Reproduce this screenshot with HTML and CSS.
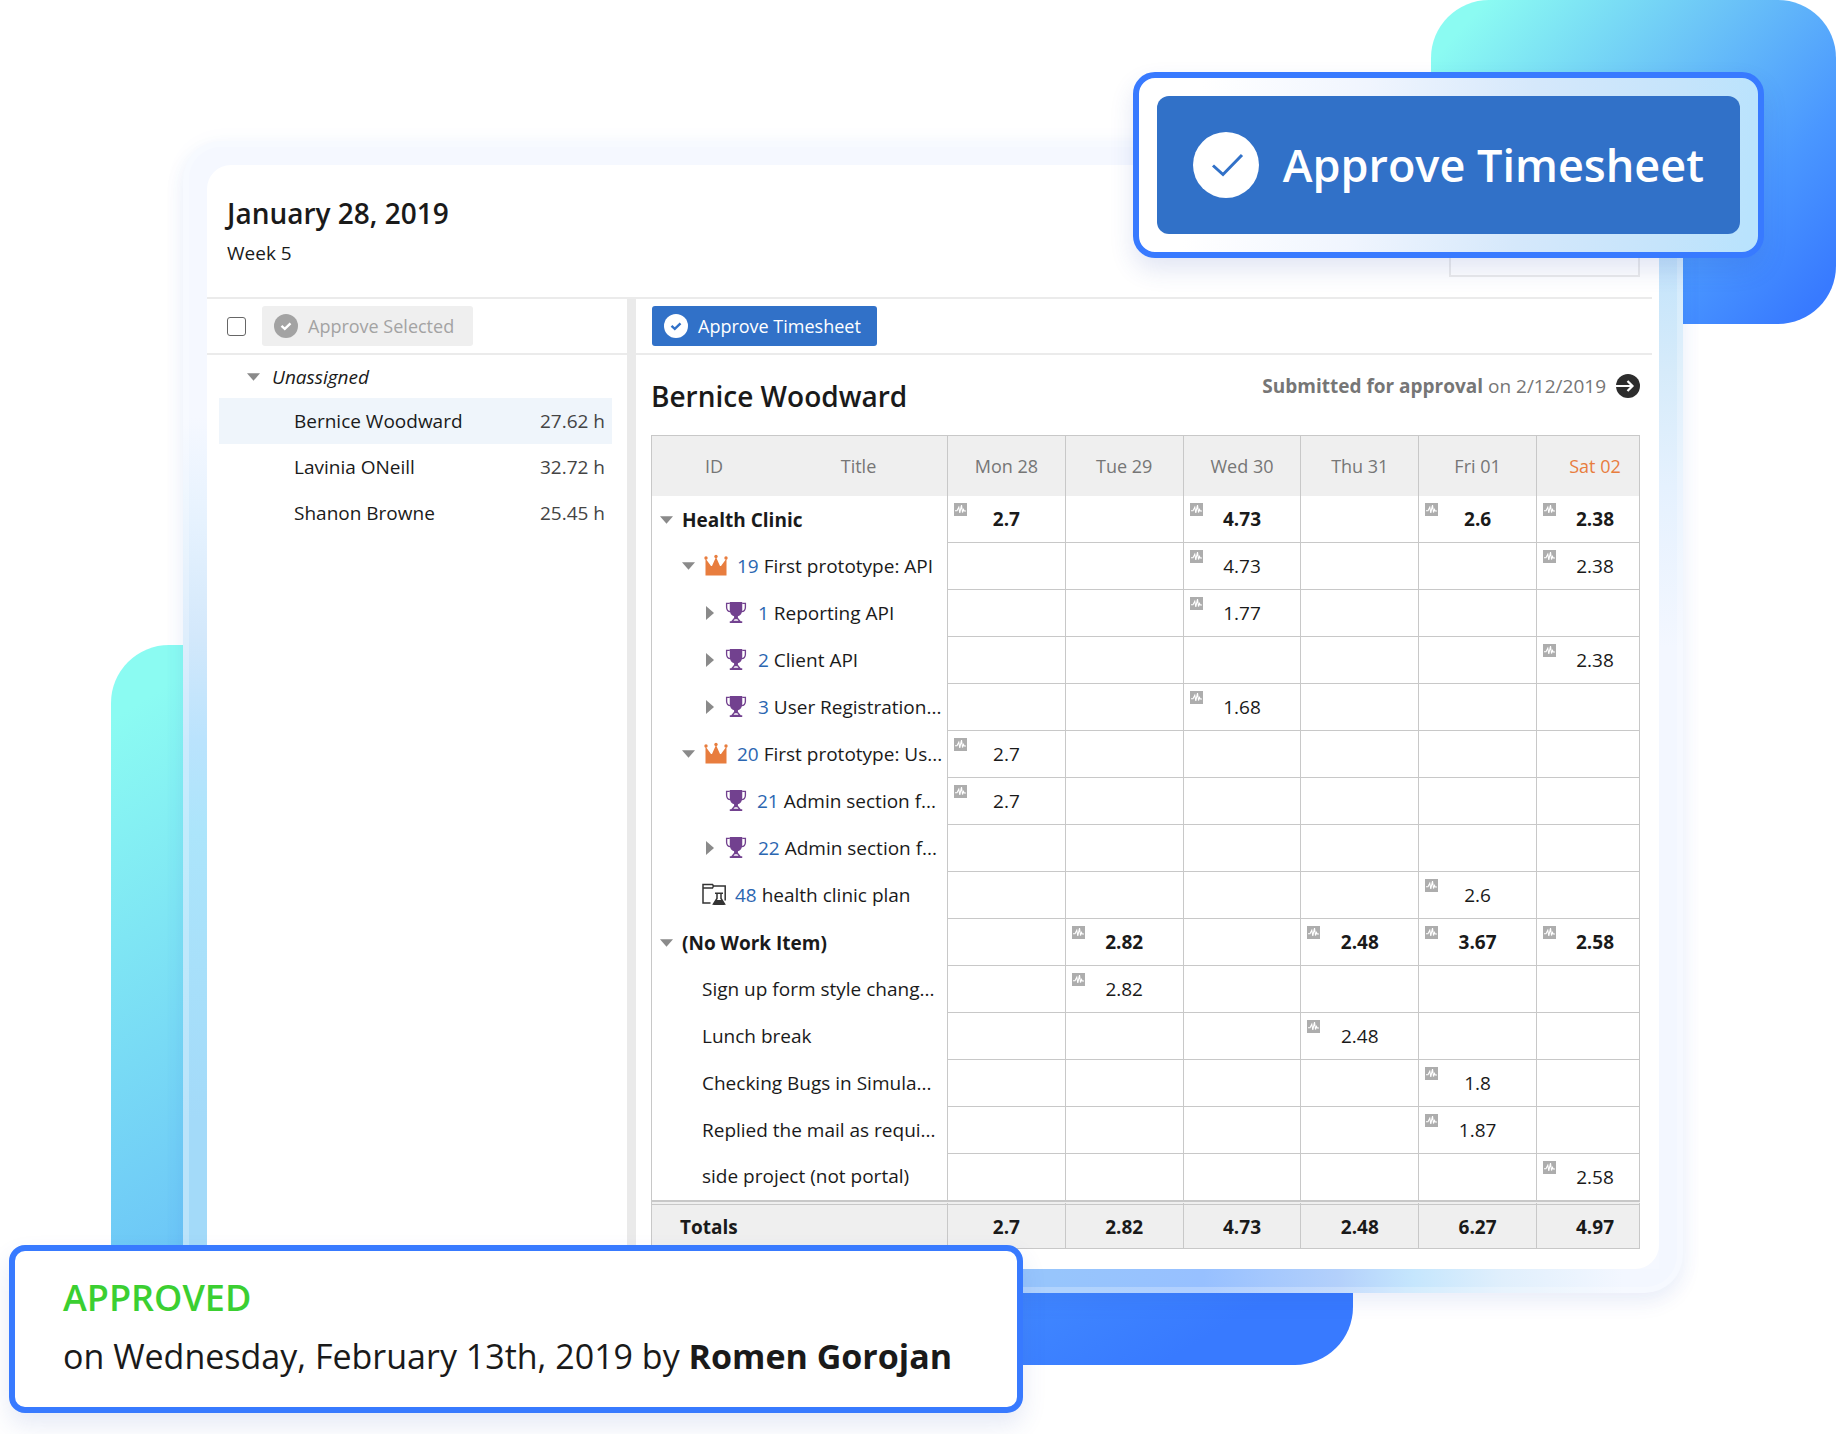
FILE: index.html
```html
<!DOCTYPE html>
<html lang="en">
<head>
<meta charset="utf-8">
<meta name="viewport" content="width=device-width, initial-scale=1">
<title>Timesheet approval</title>
<link rel="stylesheet" href="styles.css">
</head>
<body>
<svg class="sprite" aria-hidden="true">
  <symbol id="tick" viewBox="0 0 24 24"><path d="M7.500 11.800l3.300 3 5.700-5.500" fill="none" stroke="currentColor" stroke-width="2.400"/></symbol>
  <symbol id="down" viewBox="0 0 14 8"><path d="M0 0h14L7 8z" fill="#8a8a8a"/></symbol>
  <symbol id="right" viewBox="0 0 8 14"><path d="M0 0v14l8-7z" fill="#8a8a8a"/></symbol>
  <symbol id="crown" viewBox="0 0 24 22"><path d="M1.500 21V4l5.500 7.500h1L12 2.500l4 9h1L22.500 4v17z" fill="#e87d3e"/><circle cx="2" cy="3.500" r="1.700" fill="#e87d3e"/><circle cx="12" cy="2" r="1.700" fill="#e87d3e"/><circle cx="22" cy="3.500" r="1.700" fill="#e87d3e"/></symbol>
  <symbol id="trophy" viewBox="0 0 22 24"><path d="M4.500 1h13v8c0 4-2 6-4.500 7v1.500l3 3.500h1.500v2h-13v-2H6l3-3.500V16C6.500 15 4.500 13 4.500 9z" fill="#72418f"/><path d="M4.500 2.500H1.200v4c0 3 1.500 4.500 4 4.500M17.500 2.500h3.300v4c0 3-1.500 4.500-4 4.500" fill="none" stroke="#72418f" stroke-width="1.400"/><path d="M8.500 20.500c.5-1.800 4.500-1.800 5 0z" fill="#fff"/></symbol>
  <symbol id="plan" viewBox="0 0 24 22"><path d="M8.500 19.500H1V1h9.500l1 1.500h11.700V17M1 4.500h9.500l1-2" fill="none" stroke="#333" stroke-width="1.500"/><path d="M13 9.800h8M15 10v5l-3.500 5.500h11L19 15v-5" fill="none" stroke="#333" stroke-width="1.500"/><path d="M14 16.500h6l2.800 5H11.200z" fill="#333"/></symbol>
  <symbol id="pulse" viewBox="0 0 13 13"><path d="M0 0h13v13H0z" fill="#adadad"/><path d="M1 7.800h2l1.800-3.600 1 5.600 1.700-7.800 1 7.500 1-3 .8 1.500H12" fill="none" stroke="#fff" stroke-width="1.100"/></symbol>
  <symbol id="arrow" viewBox="0 0 24 24"><circle cx="12" cy="12" r="12" fill="#2d2d2d"/><path d="M0 12h16.500M11.500 7l5 5-5 5" fill="none" stroke="#fff" stroke-width="2.200"/></symbol>
</svg>

<main class="scene">
  <div class="blob blob-top"></div>
  <div class="blob blob-bottom"></div>

  <section class="frame">
    <div class="sheet">
      <header class="sheet-head">
        <div>
          <h1>January 28, 2019</h1>
          <p class="week">Week 5</p>
        </div>
        <div class="picker"></div>
      </header>

      <div class="panes">
        <aside class="people">
          <div class="toolbar">
            <input type="checkbox" class="check" aria-label="Select all">
            <button class="btn btn-muted" type="button"><svg class="badge"><use href="#tick"/></svg>Approve Selected</button>
          </div>
          <div class="group"><svg class="down"><use href="#down"/></svg><em>Unassigned</em></div>
          <ul class="list">
            <li class="person selected"><span>Bernice Woodward</span><span class="hours">27.62 h</span></li>
            <li class="person"><span>Lavinia ONeill</span><span class="hours">32.72 h</span></li>
            <li class="person"><span>Shanon Browne</span><span class="hours">25.45 h</span></li>
          </ul>
        </aside>
        <div class="splitter"></div>
        <section class="detail">
          <div class="toolbar">
            <button class="btn btn-primary" type="button"><svg class="badge"><use href="#tick"/></svg>Approve Timesheet</button>
          </div>
          <div class="title-row">
            <h2>Bernice Woodward</h2>
            <p class="status"><span><b>Submitted for approval</b> on 2/12/2019</span><svg class="arrow"><use href="#arrow"/></svg></p>
          </div>
          <table class="hours-table">
            <colgroup><col class="c-id"><col class="c-title"><col><col><col><col><col><col class="c-last"></colgroup>
            <thead>
              <tr><th class="h-id">ID</th><th class="h-title">Title</th><th>Mon 28</th><th>Tue 29</th><th>Wed 30</th><th>Thu 31</th><th>Fri 01</th><th class="weekend">Sat 02</th></tr>
            </thead>
            <tbody>
              <tr class="sum"><td colspan="2"><div class="item"><svg class="down"><use href="#down"/></svg>Health Clinic</div></td><td><svg class="pulse"><use href="#pulse"/></svg>2.7</td><td></td><td><svg class="pulse"><use href="#pulse"/></svg>4.73</td><td></td><td><svg class="pulse"><use href="#pulse"/></svg>2.6</td><td><svg class="pulse"><use href="#pulse"/></svg>2.38</td></tr>
              <tr><td colspan="2"><div class="item level-1"><svg class="down"><use href="#down"/></svg><svg class="kind"><use href="#crown"/></svg><span><a href="#19">19</a> First prototype: API</span></div></td><td></td><td></td><td><svg class="pulse"><use href="#pulse"/></svg>4.73</td><td></td><td></td><td><svg class="pulse"><use href="#pulse"/></svg>2.38</td></tr>
              <tr><td colspan="2"><div class="item level-2"><svg class="right"><use href="#right"/></svg><svg class="kind"><use href="#trophy"/></svg><span><a href="#1">1</a> Reporting API</span></div></td><td></td><td></td><td><svg class="pulse"><use href="#pulse"/></svg>1.77</td><td></td><td></td><td></td></tr>
              <tr><td colspan="2"><div class="item level-2"><svg class="right"><use href="#right"/></svg><svg class="kind"><use href="#trophy"/></svg><span><a href="#2">2</a> Client API</span></div></td><td></td><td></td><td></td><td></td><td></td><td><svg class="pulse"><use href="#pulse"/></svg>2.38</td></tr>
              <tr><td colspan="2"><div class="item level-2"><svg class="right"><use href="#right"/></svg><svg class="kind"><use href="#trophy"/></svg><span><a href="#3">3</a> User Registration...</span></div></td><td></td><td></td><td><svg class="pulse"><use href="#pulse"/></svg>1.68</td><td></td><td></td><td></td></tr>
              <tr><td colspan="2"><div class="item level-1"><svg class="down"><use href="#down"/></svg><svg class="kind"><use href="#crown"/></svg><span><a href="#20">20</a> First prototype: Us...</span></div></td><td><svg class="pulse"><use href="#pulse"/></svg>2.7</td><td></td><td></td><td></td><td></td><td></td></tr>
              <tr><td colspan="2"><div class="item leaf-2"><svg class="kind"><use href="#trophy"/></svg><span><a href="#21">21</a> Admin section f...</span></div></td><td><svg class="pulse"><use href="#pulse"/></svg>2.7</td><td></td><td></td><td></td><td></td><td></td></tr>
              <tr><td colspan="2"><div class="item level-2"><svg class="right"><use href="#right"/></svg><svg class="kind"><use href="#trophy"/></svg><span><a href="#22">22</a> Admin section f...</span></div></td><td></td><td></td><td></td><td></td><td></td><td></td></tr>
              <tr><td colspan="2"><div class="item leaf-1"><svg class="kind"><use href="#plan"/></svg><span><a href="#48">48</a> health clinic plan</span></div></td><td></td><td></td><td></td><td></td><td><svg class="pulse"><use href="#pulse"/></svg>2.6</td><td></td></tr>
              <tr class="sum"><td colspan="2"><div class="item"><svg class="down"><use href="#down"/></svg>(No Work Item)</div></td><td></td><td><svg class="pulse"><use href="#pulse"/></svg>2.82</td><td></td><td><svg class="pulse"><use href="#pulse"/></svg>2.48</td><td><svg class="pulse"><use href="#pulse"/></svg>3.67</td><td><svg class="pulse"><use href="#pulse"/></svg>2.58</td></tr>
              <tr><td colspan="2"><div class="item leaf-1">Sign up form style chang...</div></td><td></td><td><svg class="pulse"><use href="#pulse"/></svg>2.82</td><td></td><td></td><td></td><td></td></tr>
              <tr><td colspan="2"><div class="item leaf-1">Lunch break</div></td><td></td><td></td><td></td><td><svg class="pulse"><use href="#pulse"/></svg>2.48</td><td></td><td></td></tr>
              <tr><td colspan="2"><div class="item leaf-1">Checking Bugs in Simula...</div></td><td></td><td></td><td></td><td></td><td><svg class="pulse"><use href="#pulse"/></svg>1.8</td><td></td></tr>
              <tr><td colspan="2"><div class="item leaf-1">Replied the mail as requi...</div></td><td></td><td></td><td></td><td></td><td><svg class="pulse"><use href="#pulse"/></svg>1.87</td><td></td></tr>
              <tr><td colspan="2"><div class="item leaf-1">side project (not portal)</div></td><td></td><td></td><td></td><td></td><td></td><td><svg class="pulse"><use href="#pulse"/></svg>2.58</td></tr>
            </tbody>
            <tfoot>
              <tr><td colspan="2">Totals</td><td>2.7</td><td>2.82</td><td>4.73</td><td>2.48</td><td>6.27</td><td>4.97</td></tr>
            </tfoot>
          </table>
        </section>
      </div>
    </div>
  </section>

  <div class="callout">
    <button class="callout-btn" type="button">
      <svg viewBox="0 0 66 66"><circle cx="33" cy="33" r="33" fill="#fff"/><path d="M20 33.500l10 9L49 23" fill="none" stroke="#3171c8" stroke-width="3"/></svg>
      Approve Timesheet
    </button>
  </div>

  <div class="toast">
    <p class="approved">APPROVED</p>
    <p>on Wednesday, February 13th, 2019 by <b>Romen Gorojan</b></p>
  </div>
</main>
</body>
</html>
```
FILE: styles.css
```css
* { box-sizing: border-box; }

body {
  margin: 0;
  background: #fff;
  color: #1a1a1a;
  font: 19px/24px "Open Sans", "Noto Sans", sans-serif;
}

h1, h2, p, ul { margin: 0; padding: 0; }
svg { display: block; flex: none; }
button { font: inherit; border: 0; cursor: pointer; }
a { color: #2b66b1; text-decoration: none; }
.sprite { display: none; }

/* Backdrop */
.scene {
  position: relative;
  padding: 141px 153px 141px 183px;
  overflow: hidden;
}
.blob { position: absolute; border-radius: 58px; }
.blob-top {
  top: 0;
  right: 0;
  width: 405px;
  height: 324px;
  background: linear-gradient(132deg, #8bfbf2 8%, #6cc5f7 42%, #4a97ff 72%, #387aff 94%);
}
.blob-bottom {
  top: 645px;
  right: 483px;
  bottom: 69px;
  left: 111px;
  background: linear-gradient(148deg, #8bfbf2 5%, #6cc5f7 44%, #4a97ff 70%, #387aff 92%);
}

/* Frosted frame: each edge strip carries the tint of the shape behind it */
.frame {
  position: relative;
  padding: 18px;
  border: 6px solid rgba(255, 255, 255, .25);
  border-radius: 38px;
  background:
    linear-gradient(to top, #a3daf9 15%, #ace5fb 40%, #bae3fd 48%, #d3e8fb 57%, #e6f2fe 67%, #f5f8ff 76%) left / 24px 100% no-repeat border-box,
    linear-gradient(to bottom, #bfe2fb 8%, #d6ebfa 20%, #e5f1fe 30%, #f3f7ff 44%) right / 24px 100% no-repeat border-box,
    linear-gradient(to right, #97c5fc 58%, #97c0ff 68%, #b3d0fb 77%, #c5e6fd 82%, #e0effc 88%, #f3f7ff 96%) bottom / 100% 24px no-repeat border-box,
    #f5f8ff;
  box-shadow: 0 10px 20px rgba(50, 80, 180, .08), 0 2px 24px rgba(56, 122, 255, .04);
}
.sheet {
  padding: 0 7px 20px 0;
  border-radius: 24px;
  background: #fff;
}

/* Header */
.sheet-head {
  display: flex;
  justify-content: space-between;
  height: 134px;
  padding: 28px 12px 20px 20px;
  border-bottom: 2px solid #ebebeb;
}
h1, h2 { font-size: 28px; line-height: 40px; font-weight: 600; }
.week { line-height: 40px; }
.picker { width: 191px; border: 2px solid #ebebeb; }

/* Panes */
.panes { display: flex; }
.people { width: 420px; }
.splitter { width: 9px; margin-bottom: -9px; background: #eaeaea; }
.detail { flex: 1; min-width: 0; }
.toolbar {
  display: flex;
  align-items: center;
  gap: 16px;
  height: 56px;
  border-bottom: 2px solid #ebebeb;
}
.people .toolbar { padding-left: 20px; }
.detail .toolbar { padding-left: 16px; }
.check {
  appearance: none;
  width: 19px;
  height: 19px;
  margin: 0;
  border: 1px solid #666;
  border-radius: 3px;
}
.btn {
  display: flex;
  align-items: center;
  gap: 10px;
  height: 40px;
  padding: 0 16px 0 12px;
  border-radius: 3px;
  font-size: 18px;
}
.btn-muted { padding-right: 19px; background: #efefef; color: #a3a3a3; }
.btn-primary { background: #3171c8; color: #fff; }
.badge { width: 24px; height: 24px; border-radius: 50%; }
.btn-muted .badge { background: #a3a3a3; color: #fff; }
.btn-primary .badge { background: #fff; color: #3171c8; }

.group {
  display: flex;
  align-items: center;
  gap: 12px;
  height: 43px;
  padding-left: 40px;
}
.down { width: 13px; height: 8px; }
.right { width: 8px; height: 14px; }
.list { list-style: none; }
.person {
  display: flex;
  align-items: center;
  justify-content: space-between;
  height: 46px;
  margin: 0 15px 0 12px;
  padding: 0 7px 0 75px;
}
.selected { background: #eff5fb; }
.hours { color: #444; }

/* Detail */
.title-row {
  display: flex;
  justify-content: space-between;
  height: 80px;
  padding: 21px 12px 0 15px;
}
.status {
  display: flex;
  gap: 10px;
  height: 24px;
  margin-top: -2px;
  color: #767676;
}
.status b { font-weight: 700; }
.arrow { width: 24px; height: 24px; }

.hours-table {
  width: calc(100% - 27px);
  margin-left: 15px;
  table-layout: fixed;
  border-collapse: separate;
  border-spacing: 0;
  border: 1px solid #c8c8c8;
  border-right: 0;
}
.c-id { width: 118px; }
.c-title { width: 178px; }
.c-last { width: 103px; }
th, td {
  position: relative;
  padding: 0;
  border-right: 1px solid #c8c8c8;
  text-align: center;
}
th {
  height: 60px;
  background: #efefef;
  color: #767676;
  font-size: 18px;
  font-weight: 400;
}
.h-id { padding-left: 6px; border-right: 0; }
.weekend { color: #e87d3e; }
th:last-child, td:last-child { padding-left: 14px; }
td { height: 47px; }
tbody td { border-bottom: 1px solid #c8c8c8; }
tbody td:first-child { padding-bottom: 2px; border-bottom: 0; }
tbody .sum td:first-child { padding-bottom: 0; }
td:first-child { text-align: left; white-space: nowrap; }
.sum, tfoot { font-weight: 700; }
.pulse { position: absolute; top: 7px; left: 6px; width: 13px; height: 13px; }

.item { display: flex; align-items: center; gap: 9px; padding-left: 8px; }
.kind { width: 24px; height: 23px; }
.level-1 { padding-left: 30px; }
.level-2 { padding-left: 54px; gap: 10px; }
.leaf-1 { padding-left: 50px; }
.leaf-2 { padding-left: 72px; }

tbody tr:last-child td { border-bottom: 1px solid #c8c8c8; }
tfoot td {
  height: 47px;
  border-top: 4px double #c8c8c8;
  background: #efefef;
}
tfoot td:first-child { padding-left: 28px; }

/* Floating cards */
.callout {
  position: absolute;
  top: 72px;
  right: 72px;
  padding: 18px;
  border: 6px solid #387aff;
  border-radius: 22px;
  background: linear-gradient(97deg, #fff 10%, #f0f5fe 36%, #d5e8fb 62%, #c5e4fb 85%, #b9e3fd 98%);
  box-shadow: 0 12px 24px rgba(50, 80, 180, .14);
}
.callout-btn {
  display: flex;
  align-items: center;
  gap: 24px;
  height: 138px;
  padding: 0 36px;
  border-radius: 12px;
  background: #3171c8;
  color: #fff;
  font-size: 45px;
  font-weight: 600;
}
.callout-btn svg { width: 66px; height: 66px; }

.toast {
  position: absolute;
  bottom: 21px;
  left: 9px;
  width: 1014px;
  height: 168px;
  padding: 18px 48px;
  border: 6px solid #387aff;
  border-radius: 16px;
  background: #fff;
  font-size: 34px;
  line-height: 58px;
  white-space: nowrap;
  box-shadow: 0 12px 24px rgba(50, 80, 180, .12);
}
.approved { color: #3bcf31; font-size: 36px; font-weight: 600; }
```
